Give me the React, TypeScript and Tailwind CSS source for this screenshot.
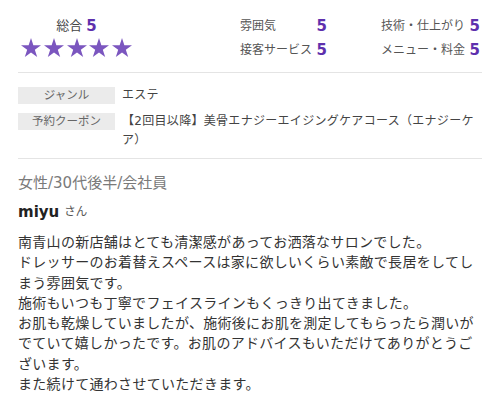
import React from "react";

const FONT = { fontFamily: '"DejaVu Sans", "Noto Sans CJK JP", sans-serif' };

function Star() {
    return (
        <svg viewBox="0 0 20 19" className="w-[20px] h-[19px]" aria-hidden>
            <polygon
                points="10,0 12.36,7.26 20,7.26 13.82,11.75 16.18,19 10,14.51 3.82,19 6.18,11.75 0,7.26 7.64,7.26"
                fill="#7b56bf"
            />
        </svg>
    );
}

const scores = [
    { label: "雰囲気", value: 5 },
    { label: "技術・仕上がり", value: 5 },
    { label: "接客サービス", value: 5 },
    { label: "メニュー・料金", value: 5 },
];

const info = [
    { label: "ジャンル", value: "エステ" },
    { label: "予約クーポン", value: "【2回目以降】美骨エナジーエイジングケアコース（エナジーケア）" },
];

const body = [
    "南青山の新店舗はとても清潔感があってお洒落なサロンでした。",
    "ドレッサーのお着替えスペースは家に欲しいくらい素敵で長居をしてしまう雰囲気です。",
    "施術もいつも丁寧でフェイスラインもくっきり出てきました。",
    "お肌も乾燥していましたが、施術後にお肌を測定してもらったら潤いがでていて嬉しかったです。お肌のアドバイスもいただけてありがとうございます。",
    "また続けて通わさせていただきます。",
];

export default function App() {
    return (
        <main className="w-[500px] h-[400px] overflow-hidden bg-white px-[18px]" style={FONT}>
            {/* rating summary */}
            <div className="flex justify-between pt-[14px] pb-[10px] border-b border-[#e4e4e4]">
                <div className="w-[117px] flex flex-col items-center">
                    <div className="h-[24px] flex items-center gap-[4px]">
                        <span className="text-[13px] text-[#444]">総合</span>
                        <span className="text-[15px] font-bold text-[#5e30ad]">5</span>
                    </div>
                    <div className="flex gap-[2.7px]">
                        {[0, 1, 2, 3, 4].map((i) => (
                            <Star key={i} />
                        ))}
                    </div>
                </div>
                <div className="w-[240px] mr-[2px] grid grid-cols-[87px_99px] gap-x-[54px]">
                    {scores.map((s) => (
                        <div key={s.label} className="h-[24px] flex items-center justify-between">
                            <span className="text-[12px] text-[#555]">{s.label}</span>
                            <span className="text-[15px] font-bold text-[#5e30ad]">{s.value}</span>
                        </div>
                    ))}
                </div>
            </div>

            {/* genre / coupon */}
            <div className="pt-[13px] pb-[8px] border-b border-[#e4e4e4] flex flex-col gap-[7px]">
                {info.map((row) => (
                    <div key={row.label} className="flex items-start">
                        <div className="w-[97px] h-[17px] mt-[1px] shrink-0 bg-[#ebebeb] flex items-center justify-center text-[11.5px] text-[#666]">
                            {row.label}
                        </div>
                        <p className="ml-[7px] flex-1 text-[12px] leading-[19px] tracking-[0.3px] text-[#444]">
                            {row.value}
                        </p>
                    </div>
                ))}
            </div>

            {/* reviewer */}
            <p className="mt-[14px] text-[15px] leading-[20px] text-[#7a7a7a]">女性/30代後半/会社員</p>
            <p className="mt-[8px] h-[22px] flex items-center gap-[5px]">
                <span className="text-[15px] font-bold text-[#222]">miyu</span>
                <span className="text-[11.5px] text-[#555]">さん</span>
            </p>

            {/* review body */}
            <div className="mt-[9px] text-[14px] leading-[20.3px] tracking-[0.3px] text-[#333]">
                {body.map((line, i) => (
                    <p key={i}>{line}</p>
                ))}
            </div>
        </main>
    );
}
